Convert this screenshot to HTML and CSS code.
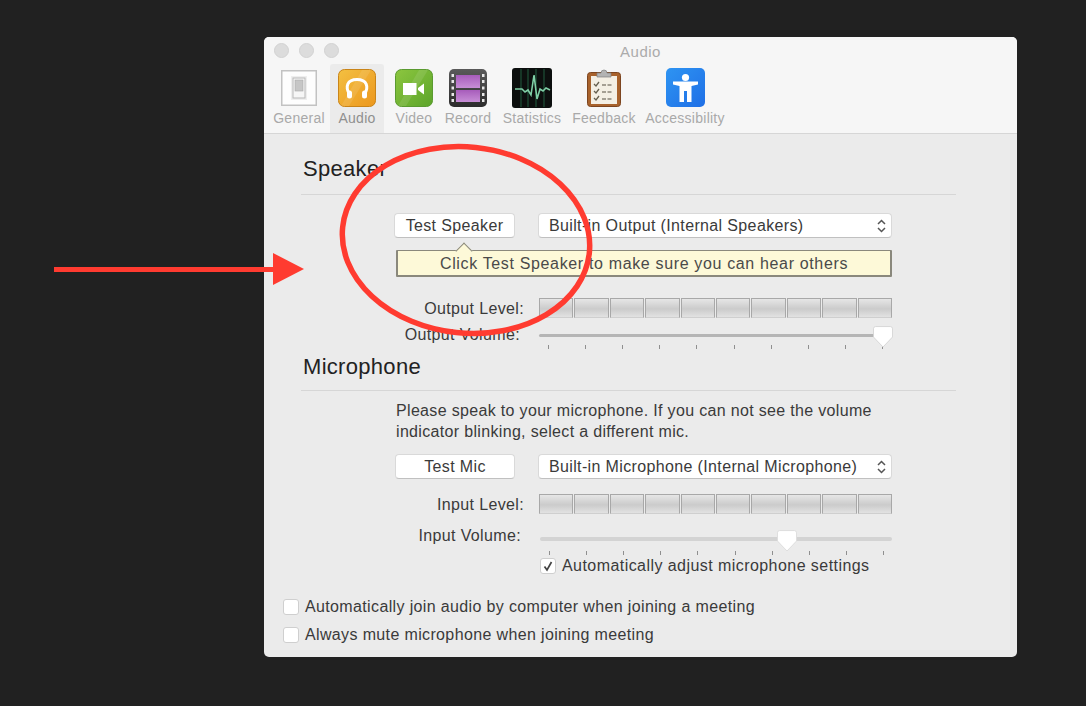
FILE: index.html
```html
<!DOCTYPE html>
<html lang="en">
<head>
<meta charset="utf-8">
<title>Audio</title>
<link rel="stylesheet" href="styles.css">
</head>
<body>
<div class="window">
  <header class="chrome">
    <div class="titlebar">
      <div class="lights"><i class="light"></i><i class="light"></i><i class="light"></i></div>
      <div class="title">Audio</div>
    </div>
    <nav class="tabs">
      <div class="tab t-general">
        <svg class="icon" width="36" height="36" viewBox="0 0 36 36"><rect x=".75" y=".75" width="34.5" height="34.5" fill="#fdfdfd" stroke="#c2c2c2" stroke-width="1.5"/><rect x="10" y="6" width="16" height="24" fill="#eeeeee"/><rect x="12" y="8" width="12" height="20" fill="#f6f6f6" stroke="#b8b8b8"/><rect x="14" y="10" width="8" height="11" fill="#c6c6c6" stroke="#a8a8a8" stroke-width=".6"/></svg>
        <span>General</span>
      </div>
      <div class="tab t-audio active">
        <svg class="icon" width="38" height="38" viewBox="0 0 38 38"><defs><linearGradient id="ga" x1="0" y1="0" x2="1" y2="1"><stop offset="0" stop-color="#f3c042"/><stop offset="1" stop-color="#ec971d"/></linearGradient></defs><rect x=".5" y=".5" width="37" height="37" rx="6" fill="url(#ga)" stroke="#c98418"/><path d="M24 1h9l-22 36H3z" fill="#fff" opacity=".1"/><path d="M11.500 25C7 18 9 10.500 19 10.500S31 18 26.500 25" fill="none" stroke="#fff" stroke-width="3"/><rect x="9" y="21.500" width="5" height="8" rx="2.500" fill="#fff"/><rect x="24" y="21.500" width="5" height="8" rx="2.500" fill="#fff"/></svg>
        <span>Audio</span>
      </div>
      <div class="tab t-video">
        <svg class="icon" width="38" height="38" viewBox="0 0 38 38"><defs><linearGradient id="gv" x1="0" y1="0" x2="1" y2="1"><stop offset="0" stop-color="#8cc63f"/><stop offset="1" stop-color="#5ca42a"/></linearGradient></defs><rect x=".5" y=".5" width="37" height="37" rx="6" fill="url(#gv)" stroke="#5a9a30"/><path d="M24 1h9L11 37H3z" fill="#fff" opacity=".1"/><rect x="8" y="14" width="13.500" height="12" fill="#fff"/><path d="M23 19l6-4.500v11l-6-4.500z" fill="#fff"/></svg>
        <span>Video</span>
      </div>
      <div class="tab t-record">
        <svg class="icon" width="38" height="38" viewBox="0 0 38 38"><defs><linearGradient id="gr" x1="0" y1="0" x2="0" y2="1"><stop offset="0" stop-color="#5a5a5a"/><stop offset="1" stop-color="#2c2c2c"/></linearGradient><linearGradient id="gf" x1="0" y1="0" x2="0" y2="1"><stop offset="0" stop-color="#a75cbb"/><stop offset="1" stop-color="#c78ed6"/></linearGradient></defs><rect width="38" height="38" rx="5" fill="url(#gr)"/><rect x="7" y="6" width="24" height="13" fill="url(#gf)"/><rect x="7" y="21" width="24" height="12" fill="url(#gf)"/><g fill="#e8e8e8"><rect x="2.500" y="5" width="2.500" height="3"/><rect x="2.500" y="11" width="2.500" height="3"/><rect x="2.500" y="17.500" width="2.500" height="3"/><rect x="2.500" y="24" width="2.500" height="3"/><rect x="2.500" y="30" width="2.500" height="3"/><rect x="33" y="5" width="2.500" height="3"/><rect x="33" y="11" width="2.500" height="3"/><rect x="33" y="17.500" width="2.500" height="3"/><rect x="33" y="24" width="2.500" height="3"/><rect x="33" y="30" width="2.500" height="3"/></g></svg>
        <span>Record</span>
      </div>
      <div class="tab t-stats">
        <svg class="icon" width="40" height="40" viewBox="0 0 40 40"><rect width="40" height="40" rx="3" fill="#0c0f0e"/><g stroke="#1f5038" stroke-width="1.200"><path d="M9 1v38M16 1v38M24 1v38M32 1v38"/></g><path d="M3 21h7l3 3 3-2 3 5 3-20 3 24 3-10 3 2 3-3 4 2" fill="none" stroke="#7fcfa6" stroke-width="1.600"/></svg>
        <span>Statistics</span>
      </div>
      <div class="tab t-feedback">
        <svg class="icon" width="34" height="39" viewBox="0 0 34 39"><rect x=".5" y="4.500" width="33" height="34" rx="3" fill="#a8622c" stroke="#7c4520"/><rect x="4" y="8" width="26" height="28" fill="#f4efe4"/><path d="M10 9V5h4a3 3 0 0 1 6 0h4v4z" fill="#b3b3b3" stroke="#808080" stroke-width=".7"/><g fill="none" stroke="#66604f" stroke-width="1.300"><path d="M7 16l2 2 3-4M7 23l2 2 3-4M7 30l2 2 3-4"/><path d="M15 17h11M15 24h11M15 31h11" stroke-dasharray="4 1.500" stroke="#8a8578"/></g></svg>
        <span>Feedback</span>
      </div>
      <div class="tab t-access">
        <svg class="icon" width="39" height="39" viewBox="0 0 39 39"><defs><linearGradient id="gx" x1="0" y1="0" x2="1" y2="1"><stop offset="0" stop-color="#2e94f2"/><stop offset="1" stop-color="#1f6fe6"/></linearGradient></defs><rect width="39" height="39" rx="5" fill="url(#gx)"/><circle cx="19.500" cy="9.500" r="3.600" fill="#fff"/><path d="M7 13.500h25v3L25.500 18v16H21V23h-3v11h-4.500V18L7 16.500z" fill="#fff"/></svg>
        <span>Accessibility</span>
      </div>
    </nav>
  </header>

  <main class="content">
    <section class="section">
      <h2 class="heading first">Speaker</h2>
      <div class="controls first-controls">
        <button class="btn">Test Speaker</button>
        <div class="select">
          <span>Built-in Output (Internal Speakers)</span>
          <svg class="chev" width="11" height="16" viewBox="0 0 11 16"><path d="M2 6l3.500-3.500L9 6M2 10l3.500 3.500L9 10" fill="none" stroke="#555" stroke-width="1.500"/></svg>
        </div>
      </div>
      <div class="tip">Click Test Speaker to make sure you can hear others</div>
      <div class="meter-row out-meter">
        <span class="label">Output Level:</span>
        <div class="meter"><i></i><i></i><i></i><i></i><i></i><i></i><i></i><i></i><i></i><i></i></div>
      </div>
      <div class="slider-row out-slider">
        <span class="label">Output Volume:</span>
        <div class="slider">
          <div class="track"></div>
          <div class="ticks"><i></i><i></i><i></i><i></i><i></i><i></i><i></i><i></i><i></i><i></i></div>
          <svg class="thumb thumb-out" width="20" height="22" viewBox="0 0 22 24"><path d="M3 .5h16a2.500 2.500 0 0 1 2.500 2.500v9L11 23 .5 12V3A2.500 2.500 0 0 1 3 .5z" fill="#fff" stroke="#d4d4d4"/></svg>
        </div>
      </div>
    </section>

    <section class="section mic">
      <h2 class="heading">Microphone</h2>
      <p class="hint">Please speak to your microphone. If you can not see the volume<br>indicator blinking, select a different mic.</p>
      <div class="controls mic-controls">
        <button class="btn btn-mic">Test Mic</button>
        <div class="select">
          <span>Built-in Microphone (Internal Microphone)</span>
          <svg class="chev" width="11" height="16" viewBox="0 0 11 16"><path d="M2 6l3.500-3.500L9 6M2 10l3.500 3.500L9 10" fill="none" stroke="#555" stroke-width="1.500"/></svg>
        </div>
      </div>
      <div class="meter-row in-meter">
        <span class="label">Input Level:</span>
        <div class="meter"><i></i><i></i><i></i><i></i><i></i><i></i><i></i><i></i><i></i><i></i></div>
      </div>
      <div class="slider-row in-slider">
        <span class="label">Input Volume:</span>
        <div class="slider">
          <div class="track"></div>
          <div class="ticks"><i></i><i></i><i></i><i></i><i></i><i></i><i></i><i></i><i></i><i></i></div>
          <svg class="thumb thumb-in" width="20" height="22" viewBox="0 0 22 24"><path d="M3 .5h16a2.500 2.500 0 0 1 2.500 2.500v9L11 23 .5 12V3A2.500 2.500 0 0 1 3 .5z" fill="#fff" stroke="#dcdcdc"/></svg>
        </div>
      </div>
      <label class="check auto">
        <span class="box"><svg width="12" height="12" viewBox="0 0 12 12"><path d="M2.500 6.500L5 10l4.500-8" fill="none" stroke="#444" stroke-width="1.700"/></svg></span>
        <span>Automatically adjust microphone settings</span>
      </label>
    </section>

    <div class="global">
      <label class="check">
        <span class="box"></span>
        <span>Automatically join audio by computer when joining a meeting</span>
      </label>
      <label class="check">
        <span class="box"></span>
        <span>Always mute microphone when joining meeting</span>
      </label>
    </div>
  </main>
</div>

<svg class="annotation" width="1086" height="706" viewBox="0 0 1086 706">
  <ellipse cx="466" cy="240" rx="124" ry="93" transform="rotate(6 466 240)" fill="none" stroke="#ff3b30" stroke-width="5.500"/>
  <rect x="54" y="267" width="222" height="5" fill="#ff3b30"/>
  <path d="M273 253l31 16-31 16z" fill="#ff3b30"/>
</svg>
</body>
</html>
```
FILE: styles.css
```css
* { box-sizing: border-box; }
html, body { margin: 0; padding: 0; }
body {
  width: 1086px;
  height: 706px;
  overflow: hidden;
  background: #212121;
  font-family: "Liberation Sans", Arial, sans-serif;
  font-size: 16px;
  letter-spacing: .36px;
  color: #3a3a3a;
  padding: 37px 0 0 264px;
}
.window {
  width: 753px;
  height: 620px;
  border-radius: 5px;
  overflow: hidden;
  background: #ebebeb;
}
.chrome {
  height: 97px;
  background: #f6f6f6;
  border-bottom: 1px solid #d6d6d6;
}
.titlebar {
  height: 27px;
  position: relative;
  display: flex;
  align-items: center;
  justify-content: center;
}
.lights {
  position: absolute;
  left: 10px;
  top: 6px;
  display: flex;
  gap: 10px;
}
.light {
  width: 15px;
  height: 15px;
  border-radius: 50%;
  background: #dcdcdc;
  border: 1px solid #d2d2d2;
}
.title {
  padding-top: 1px;
  color: #ababab;
  font-size: 15px;
  letter-spacing: .5px;
}
.tabs {
  display: flex;
  height: 69px;
  padding-left: 4px;
}
.tab {
  display: flex;
  flex-direction: column;
  align-items: center;
  height: 69px;
  font-size: 14px;
  letter-spacing: .25px;
  color: #a9a9a9;
  position: relative;
}
.tab span {
  position: absolute;
  top: 45px;
  line-height: 18px;
  white-space: nowrap;
}
.icon { margin-top: 5px; flex: none; }
.t-general { width: 62px; }
.t-general .icon { margin-top: 6px; }
.t-audio { width: 54px; }
.active { background: #ebebeb; color: #8f8f8f; border-radius: 3px 3px 0 0; }
.t-video { width: 60px; }
.t-record { width: 48px; }
.t-stats { width: 80px; }
.t-stats .icon, .t-feedback .icon, .t-access .icon { margin-top: 4px; }
.t-feedback { width: 64px; }
.t-access { width: 98px; }

.content { padding-top: 23px; }
.section { margin-left: 37px; width: 655px; }
.mic { margin-top: 7px; }
.heading {
  margin: 0;
  height: 36px;
  padding-left: 2px;
  border-bottom: 1px solid #d6d6d6;
  font-size: 22px;
  font-weight: 400;
  line-height: 24px;
  letter-spacing: .3px;
  color: #222;
}
.heading.first { height: 38px; }
.controls { display: flex; margin-left: 93px; gap: 23px; height: 25px; }
.first-controls { margin-top: 18px; }
.mic-controls { margin-top: 12px; }
.hint {
  margin: 9px 0 0 95px;
  line-height: 21px;
  letter-spacing: .33px;
  white-space: nowrap;
}
.btn {
  width: 121px;
  height: 25px;
  padding: 0;
  background: #fff;
  border: 1px solid #d9d9d9;
  border-bottom-color: #c0c0c0;
  border-radius: 4px;
  font: inherit;
  letter-spacing: inherit;
  color: #3a3a3a;
}
.btn-mic { margin-left: 1px; width: 120px; }
.select {
  width: 354px;
  height: 25px;
  padding: 0 4px 0 10px;
  display: flex;
  align-items: center;
  justify-content: space-between;
  background: #fff;
  border: 1px solid #d9d9d9;
  border-bottom-color: #c0c0c0;
  border-radius: 4px;
  white-space: nowrap;
}
.tip {
  position: relative;
  margin: 12px 0 0 95px;
  width: 496px;
  height: 27px;
  background: #fdf9d8;
  border: 2px solid #8a887c;
  border-top-width: 1px;
  border-radius: 1px;
  text-align: center;
  line-height: 26px;
  color: #4a4a4a;
  letter-spacing: .65px;
  white-space: nowrap;
}
.tip::before {
  content: "";
  position: absolute;
  left: 60px;
  top: -6px;
  width: 11px;
  height: 11px;
  background: #fdf9d8;
  border-left: 1px solid #8a887c;
  border-top: 1px solid #8a887c;
  transform: rotate(45deg);
}
.meter-row { display: flex; align-items: center; height: 20px; }
.out-meter { margin-top: 21px; }
.in-meter { margin-top: 15px; }
.label { width: 223px; text-align: right; white-space: nowrap; color: #3a3a3a; }
.meter-row .label { padding-top: 2px; }
.meter {
  margin-left: 15px;
  width: 353px;
  height: 20px;
  display: flex;
  gap: 1px;
}
.meter i {
  flex: 1;
  border: 1px solid #a8a8a8;
  border-bottom-color: #cfcfcf;
  background: linear-gradient(#e6e6e6, #cbcbcb 55%, #e2e2e2);
}
.slider-row { display: flex; height: 24px; }
.slider-row .label { line-height: 20px; }
.out-slider { margin-top: 6px; }
.out-slider .label { width: 219px; padding-top: 1px; }
.out-slider .slider { margin-left: 19px; }
.in-slider { margin-top: 10px; height: 32px; }
.in-slider .label { width: 220px; padding-top: 2px; }
.in-slider .slider { margin-left: 19px; }
.slider { position: relative; width: 353px; flex: none; }
.track {
  margin-top: 10px;
  height: 3px;
  width: 343px;
  border-radius: 2px;
  background: #b5b5b5;
}
.in-slider .track { margin-top: 13px; width: 352px; height: 4px; background: #d3d3d3; }
.ticks {
  display: flex;
  justify-content: space-between;
  width: 335px;
  margin: 8px 0 0 9px;
}
.in-slider .ticks { margin-top: 10px; }
.ticks i { width: 1px; height: 4px; background: #8f8f8f; }
.thumb { position: absolute; }
.thumb-out { left: 334px; top: 2px; }
.thumb-in { left: 237px; top: 6px; }
.check { display: flex; align-items: center; gap: 6px; height: 17px; white-space: nowrap; color: #3a3a3a; }
.box {
  width: 16px;
  height: 16px;
  flex: none;
  display: flex;
  align-items: center;
  justify-content: center;
  background: #fff;
  border: 1px solid #cfcfcf;
  border-radius: 3px;
}
.auto { margin: 1px 0 0 239px; letter-spacing: .44px; }
.global {
  margin: 24px 0 0 19px;
  display: flex;
  flex-direction: column;
  gap: 11px;
}
.annotation { position: absolute; left: 0; top: 0; pointer-events: none; }
```
